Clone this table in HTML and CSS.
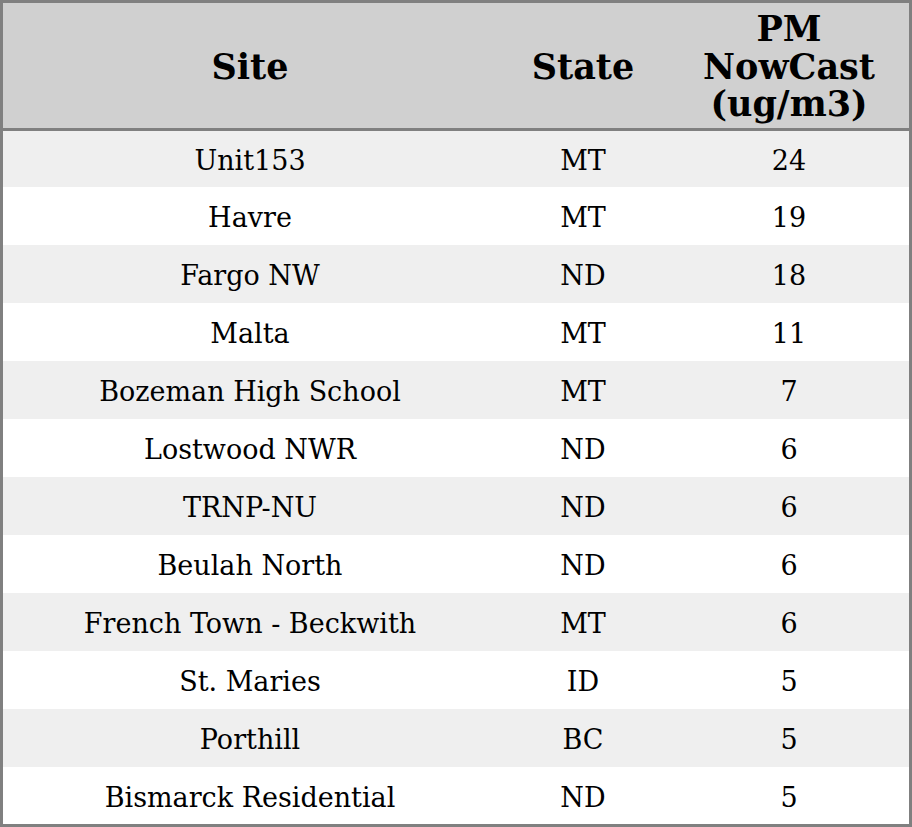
FILE: index.html
```html
<!DOCTYPE html>
<html>
<head>
<meta charset="utf-8">
<link rel="stylesheet" href="styles.css">
</head>
<body>
<table class="aq">
<colgroup><col class="c-site"><col class="c-state"><col class="c-pm"></colgroup>
<thead>
<tr><th>Site</th><th>State</th><th>PM<br>NowCast<br>(ug/m3)</th></tr>
</thead>
<tbody>
<tr><td>Unit153</td><td>MT</td><td>24</td></tr>
<tr><td>Havre</td><td>MT</td><td>19</td></tr>
<tr><td>Fargo NW</td><td>ND</td><td>18</td></tr>
<tr><td>Malta</td><td>MT</td><td>11</td></tr>
<tr><td>Bozeman High School</td><td>MT</td><td>7</td></tr>
<tr><td>Lostwood NWR</td><td>ND</td><td>6</td></tr>
<tr><td>TRNP-NU</td><td>ND</td><td>6</td></tr>
<tr><td>Beulah North</td><td>ND</td><td>6</td></tr>
<tr><td>French Town - Beckwith</td><td>MT</td><td>6</td></tr>
<tr><td>St. Maries</td><td>ID</td><td>5</td></tr>
<tr><td>Porthill</td><td>BC</td><td>5</td></tr>
<tr><td>Bismarck Residential</td><td>ND</td><td>5</td></tr>
</tbody>
</table>
</body>
</html>
```
FILE: styles.css
```css
html, body { margin: 0; padding: 0; background: #fff; }
.aq {
  width: 912px;
  border-collapse: separate;
  border-spacing: 0;
  border: 3px solid #808080;
  table-layout: fixed;
  font-family: "DejaVu Serif", serif;
  color: #000;
}
.c-site { width: 494px; }
.c-state { width: 172px; }
.c-pm { width: 240px; }
.aq th {
  background: #d0d0d0;
  font-size: 35px;
  font-weight: bold;
  line-height: 37.5px;
  height: 128px;
  padding: 2px 0 0;
  box-sizing: border-box;
  text-align: center;
  vertical-align: middle;
  border-bottom: 3px solid #808080;
}
.aq td {
  font-size: 27px;
  line-height: 30px;
  height: 58px;
  padding: 4px 0 0;
  box-sizing: border-box;
  text-align: center;
  vertical-align: middle;
}
.aq tbody tr:first-child td { height: 56px; }
.aq tbody tr:last-child td { height: 57px; }
.aq tbody tr:nth-child(odd) td { background: #efefef; }
.aq tbody tr:nth-child(even) td { background: #fff; }
```
